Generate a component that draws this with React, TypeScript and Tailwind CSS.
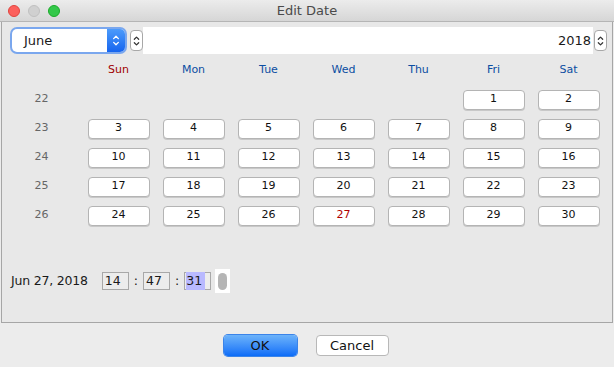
import React from "react";

const font = { fontFamily: '"DejaVu Sans", "Liberation Sans", sans-serif' };

const days = ["Sun", "Mon", "Tue", "Wed", "Thu", "Fri", "Sat"];

// weeks of June 2018, null = empty cell
const weeks: { num: number; days: (number | null)[] }[] = [
  { num: 22, days: [null, null, null, null, null, 1, 2] },
  { num: 23, days: [3, 4, 5, 6, 7, 8, 9] },
  { num: 24, days: [10, 11, 12, 13, 14, 15, 16] },
  { num: 25, days: [17, 18, 19, 20, 21, 22, 23] },
  { num: 26, days: [24, 25, 26, 27, 28, 29, 30] },
];

function Chevrons({ className }: { className?: string }) {
  return (
    <svg viewBox="0 0 8 16" className={className} fill="none" stroke="currentColor" strokeWidth={1.4} strokeLinecap="round" strokeLinejoin="round">
      <path d="M1.5 6 L4 3.5 L6.5 6" />
      <path d="M1.5 10 L4 12.5 L6.5 10" />
    </svg>
  );
}

function Stepper() {
  return (
    <div className="flex h-[21px] w-[13px] items-center justify-center rounded-[4px] border border-[#a8a8a8] bg-white text-[#333]">
      <Chevrons className="h-[14px] w-[7px]" />
    </div>
  );
}

export default function App() {
  return (
    <div className="flex h-[367px] w-[614px] flex-col bg-[#ececec] text-[#1a1a1a]" style={font}>
      {/* TITLE BAR */}
      <div className="relative flex h-[22px] items-center justify-center border-b border-[#b5b5b5] bg-gradient-to-b from-[#ececec] to-[#d6d6d6]">
        <div className="absolute left-[8px] top-[5px] flex gap-[8px]">
          <span className="h-[12px] w-[12px] rounded-full border border-[#e0443e] bg-[#fc605c]" />
          <span className="h-[12px] w-[12px] rounded-full border border-[#c0c0c0] bg-[#d0d0d0]" />
          <span className="h-[12px] w-[12px] rounded-full border border-[#1aab29] bg-[#34c84a]" />
        </div>
        <span className="text-[13px] text-[#4a4a4a]">Edit Date</span>
      </div>

      {/* PANEL */}
      <div className="mx-[1px] flex h-[301px] flex-col border-x border-b border-[#a6a6a6] bg-[#e8e8e8]">
        {/* month / year row */}
        <div className="mt-[5px] flex h-[27px] items-center pr-[5px]">
          <div className="ml-[10px] flex h-[23px] w-[113px] rounded-[5px] bg-white shadow-[0_0_0_2px_#7aa7ee]">
            <span className="flex flex-1 items-center pl-[12px] text-[13px]">June</span>
            <div className="flex w-[18px] items-center justify-center rounded-r-[5px] bg-gradient-to-b from-[#4c9bfb] to-[#1664ee] text-white">
              <Chevrons className="h-[15px] w-[8px]" />
            </div>
          </div>
          <div className="ml-[5px]">
            <Stepper />
          </div>
          <div className="flex h-[27px] flex-1 items-center justify-end bg-white pr-[2px] text-[13px]">2018</div>
          <div className="ml-[1px]">
            <Stepper />
          </div>
        </div>

        {/* calendar */}
        <div className="mt-[2px] grid grid-cols-[79px_repeat(7,75px)] auto-rows-[29px]">
          <div />
          {days.map((d) => (
            <div key={d} className={`flex items-center justify-center text-[11px] ${d === "Sun" ? "text-[#a00000]" : "text-[#0b4ea2]"}`}>
              {d}
            </div>
          ))}
          {weeks.map((w) => (
            <React.Fragment key={w.num}>
              <div className="flex items-center justify-center text-[11px] text-[#666]">{w.num}</div>
              {w.days.map((d, i) => (
                <div key={i} className="flex items-center justify-center">
                  {d !== null ? (
                    <div
                      className={`flex h-[20px] w-[62px] items-center justify-center rounded-[4px] border border-[#b4b4b4] bg-white text-[11px] shadow-[0_1px_0_#c8c8c8] ${d === 27 ? "text-[#b00000]" : "text-[#111]"}`}
                    >
                      {d}
                    </div>
                  ) : null}
                </div>
              ))}
            </React.Fragment>
          ))}
        </div>

        {/* time row */}
        <div className="mt-[39px] flex items-center pl-[9px] text-[12.5px]">
          <span className="tracking-[-0.2px]">Jun 27, 2018</span>
          <div className="ml-[14px] flex h-[18px] w-[27px] items-center border border-[#a8a8a8] bg-[#ececec] pl-[2px]">14</div>
          <span className="mx-[5px]">:</span>
          <div className="flex h-[18px] w-[27px] items-center border border-[#a8a8a8] bg-[#ececec] pl-[2px]">47</div>
          <span className="mx-[5px]">:</span>
          <div className="flex h-[18px] w-[27px] items-center border border-[#a8a8a8] bg-[#ececec] pl-[1px]">
            <span className="bg-[#b9b9ff] pr-[3px]">31</span>
          </div>
          <div className="ml-[4px] flex h-[24px] w-[15px] items-center justify-center bg-white">
            <span className="h-[17px] w-[9px] rounded-full bg-[#b5b5b5]" />
          </div>
        </div>
      </div>

      {/* BUTTON BAR */}
      <div className="mt-[12px] flex justify-center gap-[19px] pr-[2px]">
        <button className="h-[21px] w-[73px] rounded-[4px] bg-gradient-to-b from-[#6cb3fa] to-[#0a6cf7] text-[13px] text-[#111] shadow-[0_0_0_1px_#3b84e9]">
          OK
        </button>
        <button className="h-[21px] w-[73px] rounded-[4px] border border-[#b8b8b8] bg-white text-[13px] text-[#111]">
          Cancel
        </button>
      </div>
    </div>
  );
}
